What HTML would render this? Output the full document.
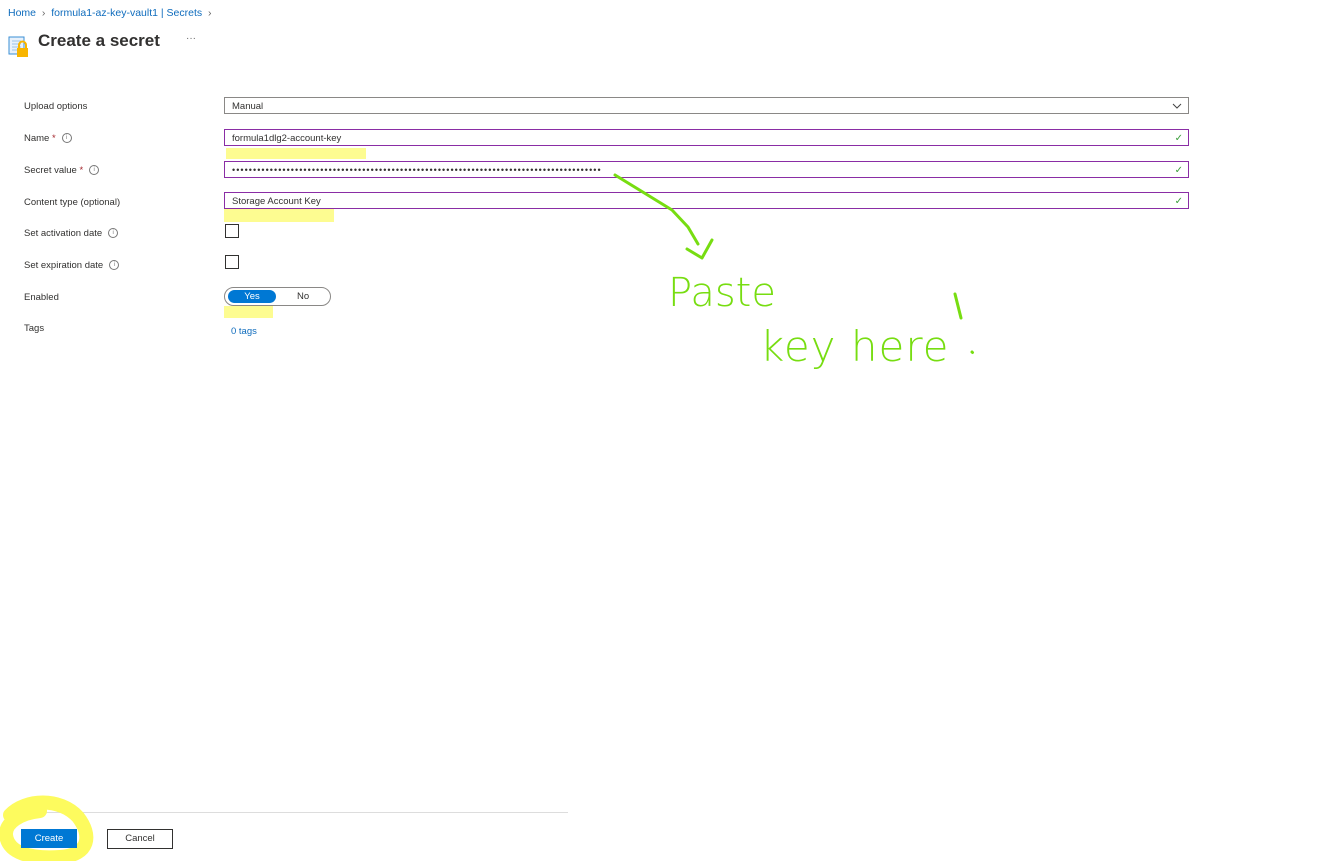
<!DOCTYPE html>
<html><head><meta charset="utf-8"><style>
body{margin:0;width:1325px;height:861px;background:#fff;font-family:"Liberation Sans",sans-serif;position:relative;overflow:hidden;color:#323130}
.a{position:absolute}
.lbl{position:absolute;left:24px;font-size:9.5px;color:#323130}
.inp{position:absolute;left:224px;height:17px;border:1px solid #8a2da5;font-size:9.5px;line-height:17px;padding-left:7px;box-sizing:border-box;width:965px}
.chk{position:absolute;color:#3a9e3a;right:5px;font-size:10px}
.info{display:inline-block;width:8px;height:8px;border:1px solid #777;border-radius:50%;font-size:6px;line-height:8px;text-align:center;color:#777;margin-left:6px;vertical-align:middle}
.hl{position:absolute;background:#fdfb7e;opacity:.85}
.hw{position:absolute;color:#77dd11;font-family:"DejaVu Sans ExtraLight","DejaVu Sans",sans-serif;font-weight:200}
</style></head><body>
<div class="a" style="left:8px;top:7px;font-size:10.5px;color:#0f6cbd">Home <span style="color:#666">&nbsp;›&nbsp;</span> formula1-az-key-vault1 | Secrets <span style="color:#666">&nbsp;›</span></div>
<svg class="a" style="left:8px;top:35px" width="24" height="24"><rect x="1" y="2" width="15" height="17" fill="#e8f1fb" stroke="#3a8fd6"/><path d="M4 6h9M4 9h9M4 12h9M4 15h6" stroke="#9cc4ea"/><rect x="9" y="13" width="11" height="9" fill="#f8b500"/><path d="M11 13v-3a3.5 3.5 0 0 1 7 0v3" fill="none" stroke="#f8b500" stroke-width="2"/></svg>
<div class="a" style="left:38px;top:31px;font-size:17px;font-weight:bold;color:#323130">Create a secret</div>
<div class="a" style="left:186px;top:33px;font-size:10px;color:#666">···</div>

<div class="hl" style="left:226px;top:148px;width:140px;height:11px"></div>
<div class="hl" style="left:224px;top:208px;width:110px;height:14px"></div>
<div class="hl" style="left:224px;top:306px;width:49px;height:12px"></div>

<div class="lbl" style="top:101px">Upload options</div>
<div class="inp" style="top:97px;border-color:#8a8886">Manual<svg class="a" style="right:6px;top:5px" width="10" height="7"><path d="M1 1l4 4 4-4" stroke="#444" fill="none"/></svg></div>
<div class="lbl" style="top:133px">Name <span style="color:#a4262c">*</span><span class="info">i</span></div>
<div class="inp" style="top:129px">formula1dlg2-account-key<span class="chk">✓</span></div>
<div class="lbl" style="top:165px">Secret value <span style="color:#a4262c">*</span><span class="info">i</span></div>
<div class="inp" style="top:161px;letter-spacing:1.05px;font-size:9px">••••••••••••••••••••••••••••••••••••••••••••••••••••••••••••••••••••••••••••••••••••••••<span class="chk" style="letter-spacing:0">✓</span></div>
<div class="lbl" style="top:197px">Content type (optional)</div>
<div class="inp" style="top:192px">Storage Account Key<span class="chk">✓</span></div>
<div class="lbl" style="top:228px">Set activation date<span class="info">i</span></div>
<div class="a" style="left:225px;top:224px;width:12px;height:12px;border:1px solid #323130"></div>
<div class="lbl" style="top:260px">Set expiration date<span class="info">i</span></div>
<div class="a" style="left:225px;top:255px;width:12px;height:12px;border:1px solid #323130"></div>
<div class="lbl" style="top:292px">Enabled</div>
<div class="a" style="left:224px;top:287px;width:107px;height:19px;border:1px solid #8a8886;border-radius:10px;box-sizing:border-box"></div>
<div class="a" style="left:228px;top:290px;width:48px;height:13px;background:#0078d4;border-radius:7px;color:#fff;font-size:9.5px;text-align:center;line-height:13px">Yes</div>
<div class="a" style="left:297px;top:290px;font-size:9.5px;line-height:13px">No</div>
<div class="lbl" style="top:323px">Tags</div>
<div class="a" style="left:231px;top:326px;font-size:9.5px;color:#0f6cbd">0 tags</div>

<div class="a" style="left:7px;top:812px;width:561px;height:1px;background:#ddd"></div>
<svg class="a" style="left:0;top:795px" width="105" height="66"><path d="M10 20C25 4 60 2 78 22C92 40 90 60 60 62C30 64 8 58 6 40C5 28 20 18 40 16" fill="none" stroke="#fdfb5e" stroke-width="14" stroke-linecap="round"/></svg>
<div class="a" style="left:21px;top:829px;width:56px;height:19px;background:#0078d4;color:#fff;font-size:9.5px;text-align:center;line-height:19px">Create</div>
<div class="a" style="left:107px;top:829px;width:64px;height:18px;border:1px solid #323130;font-size:9.5px;text-align:center;line-height:18px">Cancel</div>

<svg class="a" style="left:0;top:0" width="1325" height="861"><path d="M615 175L672 210L688 227L698 244M687 249L702 258L712 240" fill="none" stroke="#77dd11" stroke-width="3" stroke-linecap="round" stroke-linejoin="round"/><path d="M955 294L961 318M972 352l.5 .5" fill="none" stroke="#77dd11" stroke-width="3" stroke-linecap="round"/></svg>
<div class="hw" style="left:668px;top:270px;font-size:40px;letter-spacing:0px">Paste</div>
<div class="hw" style="left:760px;top:322px;font-size:42px;letter-spacing:1px">key here</div>
</body></html>
